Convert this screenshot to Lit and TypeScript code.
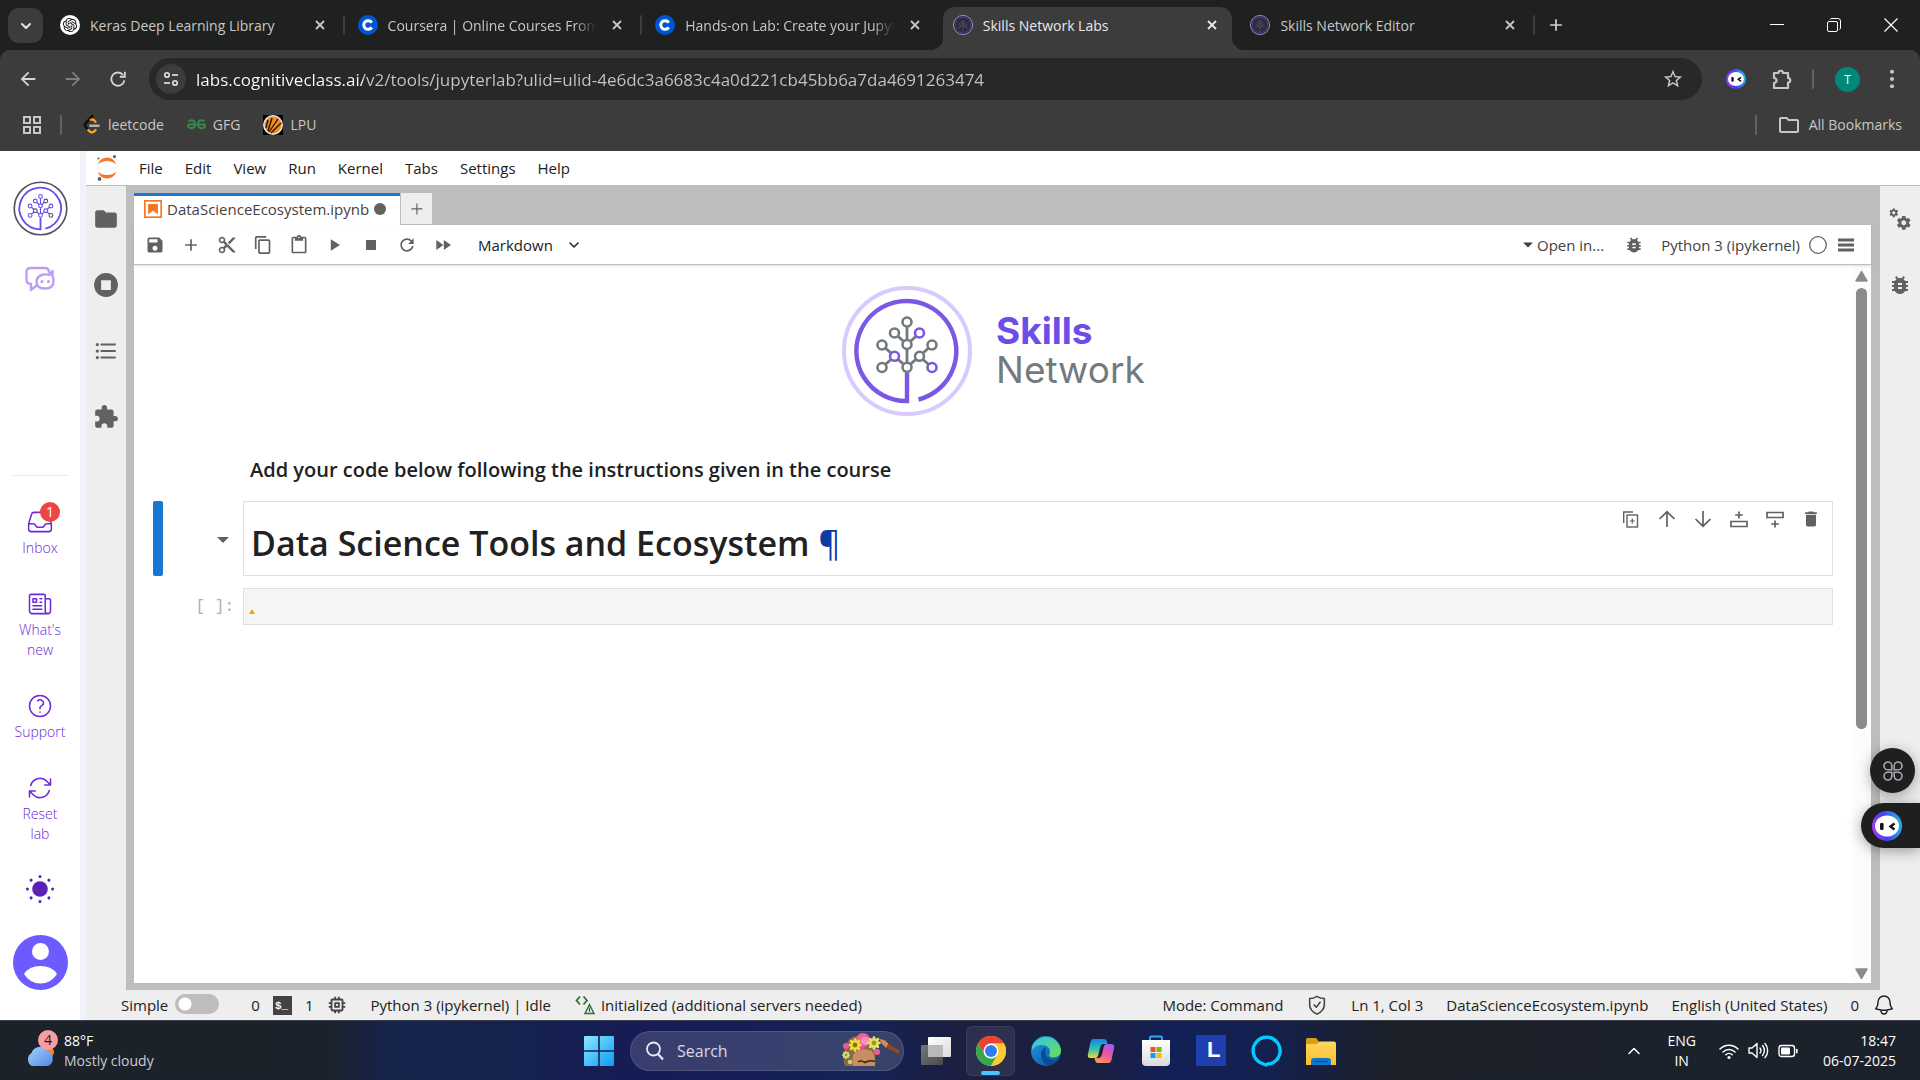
import { LitElement, html, svg, css, nothing, TemplateResult } from "lit";
import { customElement } from "lit/decorators.js";
import { classMap } from "lit/directives/class-map.js";

type Glyph = TemplateResult;

const icon = (size: number, body: Glyph, box = "0 0 24 24", fill = "currentColor") => html`
  <svg class="icon" width=${size} height=${size} viewBox=${box} fill=${fill} aria-hidden="true">${body}</svg>`;

const path = (d: string) => svg`<path d=${d}></path>`;
const line = (d: string, w: number) =>
  svg`<path d=${d} fill="none" stroke="currentColor" stroke-width=${w} stroke-linecap="round" stroke-linejoin="round"></path>`;

const P = {
  folder: "M10 4H4c-1.1 0-1.99.9-1.99 2L2 18c0 1.1.9 2 2 2h16c1.1 0 2-.9 2-2V8c0-1.1-.9-2-2-2h-8l-2-2z",
  folderLine: "M9.17 6l2 2H20v10H4V6h5.17M10 4H4c-1.1 0-1.99.9-1.99 2L2 18c0 1.1.9 2 2 2h16c1.1 0 2-.9 2-2V8c0-1.1-.9-2-2-2h-8l-2-2z",
  save: "M17 3H5c-1.11 0-2 .9-2 2v14c0 1.1.89 2 2 2h14c1.1 0 2-.9 2-2V7l-4-4zm-5 16c-1.66 0-3-1.34-3-3s1.34-3 3-3 3 1.34 3 3-1.34 3-3 3zm3-10H5V5h10v4z",
  add: "M19 13h-6v6h-2v-6H5v-2h6V5h2v6h6v2z",
  cut: "M9.64 7.64c.23-.5.36-1.05.36-1.64 0-2.21-1.79-4-4-4S2 3.79 2 6s1.79 4 4 4c.59 0 1.14-.13 1.64-.36L10 12l-2.36 2.36C7.14 14.13 6.59 14 6 14c-2.21 0-4 1.79-4 4s1.79 4 4 4 4-1.79 4-4c0-.59-.13-1.14-.36-1.64L12 14l7 7h3v-1L9.64 7.64zM6 8c-1.1 0-2-.89-2-2s.9-2 2-2 2 .89 2 2-.9 2-2 2zm0 12c-1.1 0-2-.89-2-2s.9-2 2-2 2 .89 2 2-.9 2-2 2zm6-7.5c-.28 0-.5-.22-.5-.5s.22-.5.5-.5.5.22.5.5-.22.5-.5.5zM19 3l-6 6 2 2 7-7V3z",
  copy: "M11.9,1H3.2C2.4,1,1.7,1.7,1.7,2.5v10.2h1.5V2.5h8.7V1z M14.1,3.9h-8c-0.8,0-1.5,0.7-1.5,1.5v10.2c0,0.8,0.7,1.5,1.5,1.5h8c0.8,0,1.5-0.7,1.5-1.5V5.4C15.5,4.6,14.9,3.9,14.1,3.9z M14.1,15.5h-8V5.4h8V15.5z",
  paste: "M19 2h-4.18C14.4.84 13.3 0 12 0c-1.3 0-2.4.84-2.82 2H5c-1.1 0-2 .9-2 2v16c0 1.1.9 2 2 2h14c1.1 0 2-.9 2-2V4c0-1.1-.9-2-2-2zm-7 0c.55 0 1 .45 1 1s-.45 1-1 1-1-.45-1-1 .45-1 1-1zm7 18H5V4h2v3h10V4h2v16z",
  run: "M7 5v14l11-7z",
  stop: "M6 6h12v12H6z",
  restart: "M9 13.5c-2.49 0-4.5-2.01-4.5-4.5S6.51 4.5 9 4.5c1.24 0 2.36.52 3.17 1.33L10 8h5V3l-1.76 1.76C12.15 3.68 10.66 3 9 3 5.69 3 3.01 5.69 3.01 9S5.69 15 9 15c2.97 0 5.43-2.16 5.9-5h-1.52c-.46 2-2.24 3.5-4.38 3.5z",
  forward: "M4 18l8.5-6L4 6v12zm9-12v12l8.5-6L13 6z",
  bug: "M20 8h-2.81c-.45-.78-1.07-1.45-1.82-1.96L17 4.41 15.59 3l-2.17 2.17C12.96 5.06 12.49 5 12 5c-.49 0-.96.06-1.41.17L8.41 3 7 4.41l1.62 1.63C7.88 6.55 7.26 7.22 6.81 8H4v2h2.09c-.05.33-.09.66-.09 1v1H4v2h2v1c0 .34.04.67.09 1H4v2h2.81c1.04 1.79 2.97 3 5.19 3s4.15-1.21 5.19-3H20v-2h-2.09c.05-.33.09-.66.09-1v-1h2v-2h-2v-1c0-.34-.04-.67-.09-1H20V8zm-6 8h-4v-2h4v2zm0-4h-4v-2h4v2z",
  list: "M7 5h14v2H7zM7 11h14v2H7zM7 17h14v2H7zM2.500 6a1.500 1.500 0 1 0 3 0a1.500 1.500 0 1 0-3 0M2.500 12a1.500 1.500 0 1 0 3 0a1.500 1.500 0 1 0-3 0M2.500 18a1.500 1.500 0 1 0 3 0a1.500 1.500 0 1 0-3 0",
  extension: "M20.5 11H19V7c0-1.1-.9-2-2-2h-4V3.500C13 2.120 11.880 1 10.500 1S8 2.120 8 3.500V5H4c-1.100 0-1.990.9-1.990 2v3.800H3.500c1.490 0 2.700 1.210 2.700 2.700s-1.210 2.700-2.700 2.700H2V20c0 1.100.9 2 2 2h3.800v-1.500c0-1.490 1.210-2.700 2.700-2.700 1.490 0 2.700 1.210 2.700 2.700V22H17c1.100 0 2-.9 2-2v-4h1.500c1.380 0 2.500-1.120 2.500-2.500S21.880 11 20.500 11z",
  gear: "M19.43 12.98c.04-.32.07-.64.07-.98s-.03-.66-.07-.98l2.11-1.65c.19-.15.24-.42.12-.64l-2-3.46c-.12-.22-.39-.3-.61-.22l-2.49 1c-.52-.4-1.08-.73-1.69-.98l-.38-2.65C14.46 2.18 14.25 2 14 2h-4c-.25 0-.46.18-.49.42l-.38 2.65c-.61.25-1.17.59-1.69.98l-2.49-1c-.23-.09-.49 0-.61.22l-2 3.46c-.13.22-.07.49.12.64l2.11 1.65c-.04.32-.07.65-.07.98s.03.66.07.98l-2.11 1.65c-.19.15-.24.42-.12.64l2 3.46c.12.22.39.3.61.22l2.49-1c.52.4 1.08.73 1.69.98l.38 2.65c.03.24.24.42.49.42h4c.25 0 .46-.18.49-.42l.38-2.65c.61-.25 1.17-.59 1.69-.98l2.49 1c.23.09.49 0 .61-.22l2-3.46c.12-.22.07-.49-.12-.64l-2.11-1.65zM12 15.5c-1.93 0-3.5-1.57-3.5-3.5s1.57-3.5 3.5-3.5 3.5 1.57 3.5 3.5-1.57 3.5-3.5 3.5z",
  trash: "M6 19c0 1.1.9 2 2 2h8c1.1 0 2-.9 2-2V7H6v12zM19 4h-3.5l-1-1h-5l-1 1H5v2h14V4z",
  star: "M22 9.24l-7.19-.62L12 2 9.19 8.63 2 9.24l5.46 4.73L5.82 21 12 17.27 18.18 21l-1.63-7.03L22 9.24zM12 15.4l-3.76 2.27 1-4.28-3.32-2.88 4.38-.38L12 6.1l1.71 4.04 4.38.38-3.32 2.88 1 4.28L12 15.4z",
  back: "M20 11H7.83l5.59-5.59L12 4l-8 8 8 8 1.41-1.41L7.83 13H20v-2z",
  chip: "M15 9H9v6h6V9zm-2 4h-2v-2h2v2zm8-2V9h-2V7c0-1.100-.9-2-2-2h-2V3h-2v2h-2V3H9v2H7c-1.100 0-2 .9-2 2v2H3v2h2v2H3v2h2v2c0 1.100.9 2 2 2h2v2h2v-2h2v2h2v-2h2c1.100 0 2-.9 2-2v-2h2v-2h-2v-2h2zm-4 6H7V7h10v10z",
  inbox: "M2.25 13.5h3.86a2.25 2.25 0 0 1 2.012 1.244l.256.512a2.25 2.25 0 0 0 2.013 1.244h3.218a2.25 2.25 0 0 0 2.013-1.244l.256-.512a2.25 2.25 0 0 1 2.013-1.244h3.859m-19.5.338V18a2.25 2.25 0 0 0 2.25 2.25h15A2.25 2.25 0 0 0 21.75 18v-4.162c0-.224-.034-.447-.1-.661L19.24 5.338a2.25 2.25 0 0 0-2.15-1.588H6.911a2.25 2.25 0 0 0-2.15 1.588L2.35 13.177a2.25 2.25 0 0 0-.1.661Z",
  news: "M12 7.5h1.5m-1.5 3h1.5m-7.5 3h7.5m-7.5 3h7.5m3-9h3.375c.621 0 1.125.504 1.125 1.125V18a2.25 2.25 0 0 1-2.25 2.25M16.5 7.5V18a2.25 2.25 0 0 0 2.25 2.25M16.5 7.5V4.875c0-.621-.504-1.125-1.125-1.125H4.125C3.504 3.75 3 4.254 3 4.875V18a2.25 2.25 0 0 0 2.25 2.25h13.5M6 7.5h3v3H6v-3Z",
  help: "M9.879 7.519c1.171-1.025 3.071-1.025 4.242 0 1.172 1.025 1.172 2.687 0 3.712-.203.179-.43.326-.67.442-.745.361-1.45.999-1.45 1.827v.75M21 12a9 9 0 1 1-18 0 9 9 0 0 1 18 0Zm-9 5.25h.008v.008H12v-.008Z",
  reset: "M16.023 9.348h4.992v-.001M2.985 19.644v-4.992m0 0h4.992m-4.993 0 3.181 3.183a8.25 8.25 0 0 0 13.803-3.7M4.031 9.865a8.25 8.25 0 0 1 13.803-3.7l3.181 3.182m0-4.991v4.99",
  bell: "M14.857 17.082a23.848 23.848 0 0 0 5.454-1.31A8.967 8.967 0 0 1 18 9.75V9A6 6 0 0 0 6 9v.75a8.967 8.967 0 0 1-2.312 6.022c1.733.64 3.56 1.085 5.455 1.31m5.714 0a24.255 24.255 0 0 1-5.714 0m5.714 0a3 3 0 1 1-5.714 0",
  knot: "M22.2819 9.8211a5.9847 5.9847 0 0 0-.5157-4.9108 6.0462 6.0462 0 0 0-6.5098-2.9A6.0651 6.0651 0 0 0 4.9807 4.1818a5.9847 5.9847 0 0 0-3.9977 2.9 6.0462 6.0462 0 0 0 .7427 7.0966 5.98 5.98 0 0 0 .511 4.9107 6.051 6.051 0 0 0 6.5146 2.9001A5.9847 5.9847 0 0 0 13.2599 24a6.0557 6.0557 0 0 0 5.7718-4.2058 5.9894 5.9894 0 0 0 3.9977-2.9001 6.0557 6.0557 0 0 0-.7475-7.0729zm-9.022 12.6081a4.4755 4.4755 0 0 1-2.8764-1.0408l.1419-.0804 4.7783-2.7582a.7948.7948 0 0 0 .3927-.6813v-6.7369l2.02 1.1686a.071.071 0 0 1 .038.052v5.5826a4.504 4.504 0 0 1-4.4945 4.4944zm-9.6607-4.1254a4.4708 4.4708 0 0 1-.5346-3.0137l.142.0852 4.783 2.7582a.7712.7712 0 0 0 .7806 0l5.8428-3.3685v2.3324a.0804.0804 0 0 1-.0332.0615L9.74 19.9502a4.4992 4.4992 0 0 1-6.1408-1.6464zM2.3408 7.8956a4.485 4.485 0 0 1 2.3655-1.9728V11.6a.7664.7664 0 0 0 .3879.6765l5.8144 3.3543-2.0201 1.1685a.0757.0757 0 0 1-.071 0l-4.8303-2.7865A4.504 4.504 0 0 1 2.3408 7.872zm16.5963 3.8558L13.1038 8.364 15.1192 7.2a.0757.0757 0 0 1 .071 0l4.8303 2.7913a4.4944 4.4944 0 0 1-.6765 8.1042v-5.6772a.79.79 0 0 0-.407-.667zm2.0107-3.0231l-.142-.0852-4.7735-2.7818a.7759.7759 0 0 0-.7854 0L9.409 9.2297V6.8974a.0662.0662 0 0 1 .0284-.0615l4.8303-2.7866a4.4992 4.4992 0 0 1 6.6802 4.66zM8.3065 12.863l-2.02-1.1638a.0804.0804 0 0 1-.038-.0567V6.0742a4.4992 4.4992 0 0 1 7.3757-3.4537l-.142.0805L8.704 5.459a.7948.7948 0 0 0-.3927.6813zm1.0976-2.3654l2.602-1.4998 2.6069 1.4998v2.9994l-2.5974 1.4997-2.6067-1.4997Z",
};

/* Skills Network tree emblem. "accented" lists the nodes drawn in the second colour. */
const NODES: [number, number][] = [
  [0, -29], [-12.5, -18], [12.5, -18], [0, -6.5], [-25, -6], [25, -6],
  [-12.5, 5.3], [12.5, 5.3], [-25, 16.5], [25, 16.5], [0, 16.3],
];
interface TreeLook { outer: string; ring: string; node: string; accent: string; accented: number[]; bg: string; weight: number }
const tree = (size: number, t: TreeLook) => icon(size, svg`
  <circle r="63" fill=${t.bg} stroke=${t.outer} stroke-width=${t.weight}></circle>
  <path d="M11.500 48.500A50 50 0 1 0 -1 50H0V22" fill="none" stroke=${t.ring} stroke-width="4.400"></path>
  <path d="M0 -29V16M-12.500 -18L0 -6.500L12.500 -18M-25 -6L0 16.300L25 -6M-25 16.500L-12.500 5.300M25 16.500L12.500 5.300" fill="none" stroke=${t.node} stroke-width="2.800"></path>
  ${NODES.map(([x, y], i) => svg`<circle cx=${x} cy=${y} r="4.500" fill=${t.bg} stroke=${t.accented.includes(i) ? t.accent : t.node} stroke-width="2.600"></circle>`)}
`, "-66 -66 132 132", "none");

const treeFavicon = () => tree(20, { outer: "#a598d8", ring: "#5f45b8", node: "#6d6580", accent: "#6b4fd0", accented: [2, 6, 9], bg: "#2c2a35", weight: 6 });

const cIcon = () => icon(20, svg`<circle cx="12" cy="12" r="12" fill="#0056d2"></circle>
  <path d="M16.500 9.200A5.200 5.200 0 1 0 16.500 14.800" fill="none" stroke="#fff" stroke-width="3.600"></path>`);
const knotIcon = () => icon(20, svg`<circle cx="12" cy="12" r="12" fill="#fff"></circle>
  <path transform="translate(3.500 3.500) scale(.71)" fill="#111" d=${P.knot}></path>`);

const closeIcon = (s = 12) => icon(s, svg`<path d="M2 2L10 10M10 2L2 10" stroke="currentColor" stroke-width="1.800" fill="none"></path>`, "0 0 12 12");

/* Assistant face, shared by the extension button and the floating pill. */
const face = (size: number) => icon(size, svg`
    <defs><linearGradient id="face" x1="0" y1=".7" x2="1" y2=".5">
      <stop offset="0" stop-color="#a83cf0"></stop><stop offset=".45" stop-color="#4a3df5"></stop><stop offset="1" stop-color="#1fb6e6"></stop>
    </linearGradient></defs>
    <circle cx="15" cy="15" r="15" fill="url(#face)"></circle>
    <ellipse cx="15" cy="15" rx="12" ry="10.500" fill="#fff"></ellipse>
    <rect x="8" y="12" width="3.600" height="7" rx="1.200" fill="#111"></rect>
    <path d="M22.500 12.500L18.500 15.500L22.500 18.500" fill="none" stroke="#111" stroke-width="2.400"></path>`, "0 0 30 30");

const sharedStyles = css`
  :host, * { box-sizing: border-box; }
  .icon { display: block; flex: none; }
  button, input, select { font: inherit; color: inherit; margin: 0; }
  button { border: 0; padding: 0; background: none; display: flex; align-items: center; justify-content: center; cursor: pointer; }
  a { color: inherit; text-decoration: none; }
`;

interface Tab { title: string; icon: () => Glyph; active?: boolean; quiet?: boolean }

@customElement("browser-chrome")
class BrowserChrome extends LitElement {
  static styles = [sharedStyles, css`
    :host { display: block; background: #1f2120; color: #c7c7c7; font-size: 14px; }
    .strip { display: flex; align-items: stretch; height: 50px; }
    .search { width: 35px; height: 35px; margin: 8px 4px 0 8px; border-radius: 11px; background: #3c3c3c; color: #e3e3e3; }
    .tabs { display: grid; grid-template-columns: repeat(5, minmax(0, 1fr)); flex: 0 1 1488px; }
    .tab { position: relative; display: flex; align-items: center; gap: 10px; padding: 0 18px 0 13px; min-width: 0; }
    .title { flex: 1; min-width: 0; overflow: hidden; white-space: nowrap; }
    .fade { -webkit-mask-image: linear-gradient(90deg, #000 88%, transparent 98%); mask-image: linear-gradient(90deg, #000 88%, transparent 98%); }
    .label { display: flex; flex: 1; align-items: center; gap: 10px; min-width: 0; height: 50px; position: relative; }
    .rule::after { content: ""; position: absolute; right: 0; top: 15px; width: 2px; height: 20px; background: #3c3d3d; border-radius: 1px; }
    .active { color: #e8e8e8; }
    .active::before { content: ""; position: absolute; inset: 7px 5px 0 3px; background: #3c3c3c; border-radius: 12px 12px 0 0; }
    .flare { position: absolute; bottom: 0; width: 12px; height: 12px; }
    .flare-l { left: -9px; background: radial-gradient(circle at 0 0, transparent 12px, #3c3c3c 12px); }
    .flare-r { right: -7px; background: radial-gradient(circle at 100% 0, transparent 12px, #3c3c3c 12px); }
    .close { width: 14px; height: 20px; position: relative; }
    .new { width: 42px; color: #d5d5d5; }
    .window { display: flex; margin-left: auto; padding-right: 1px; color: #fff; }
    .window button { width: 57px; }
    .bar { display: flex; align-items: center; height: 58px; padding: 0 13px 0 5px; background: #3c3c3c; border-radius: 10px 10px 0 0; }
    .nav { width: 45px; height: 42px; color: #d5d5d5; }
    .dim { color: #7f7f7f; }
    .omni { display: flex; flex: 1; align-items: center; height: 42px; margin: 0 11px 0 9px; padding: 0 18px 0 7px; border-radius: 21px; background: #282828; }
    .site { width: 30px; height: 30px; border-radius: 50%; background: #3c3c3c; color: #d5d5d5; }
    .url { flex: 1; min-width: 0; margin-left: 10px; border: 0; padding: 0; outline: 0; font-size: 17px; height: 30px;
      background: linear-gradient(90deg, #fff 167px, #c4c6c9 167px) text; -webkit-text-fill-color: transparent; }
    .ext { width: 46px; height: 36px; }
    .sep { width: 2px; height: 20px; background: #616161; border-radius: 1px; }
    .bar .sep { margin-left: 7px; }
    .avatar { width: 25px; height: 25px; margin: 0 17px 0 21px; border-radius: 50%; background: #00897b; color: #fff; font-size: 12px; }
    .more { width: 30px; height: 30px; }
    .marks { display: flex; align-items: center; height: 43px; padding: 0 18px 10px 22px; background: #3c3c3c; }
    .mark { display: flex; align-items: center; gap: 7px; margin-left: 23px; height: 24px; }
    .marks .sep { margin-left: 18px; }
    .sep + .mark { margin-left: 20px; }
    .all { margin-left: auto; display: flex; align-items: center; }
    .all .mark { gap: 8px; }
  `];

  private tabs: Tab[] = [
    { title: "Keras Deep Learning Library", icon: knotIcon },
    { title: "Coursera | Online Courses From Top Universities", icon: cIcon },
    { title: "Hands-on Lab: Create your Jupyter Notebook", icon: cIcon, quiet: true },
    { title: "Skills Network Labs", icon: treeFavicon, active: true },
    { title: "Skills Network Editor", icon: treeFavicon },
  ];

  render() {
    return html`
      <div class="strip">
        <button class="search" aria-label="Search tabs">${icon(14, line("M3 5L7 9L11 5", 2), "0 0 14 14")}</button>
        <div class="tabs">
          ${this.tabs.map((t) => html`
            <div class=${classMap({ tab: true, active: !!t.active, rule: !t.active && !t.quiet })}>
              ${t.active ? html`<span class="flare flare-l"></span><span class="flare flare-r"></span>` : nothing}
              <div class="label">${t.icon()}<span class=${classMap({ title: true, fade: t.title.length > 30 })}>${t.title}</span></div>
              <button class="close" aria-label="Close tab">${closeIcon()}</button>
            </div>`)}
        </div>
        <button class="new" aria-label="New tab">${icon(20, path(P.add))}</button>
        <div class="window">
          <button aria-label="Minimize">${icon(14, svg`<path d="M0 6.500H14" stroke="currentColor"></path>`, "0 0 14 14")}</button>
          <button aria-label="Restore">${icon(14, svg`<rect x=".5" y="3.500" width="10" height="10" rx="1.500" fill="none" stroke="currentColor"></rect><path d="M3 1.500Q3.500 .5 5 .5H11Q13.500 .5 13.500 3V10Q13.500 11 12.500 11.500" fill="none" stroke="currentColor"></path>`, "0 0 14 14")}</button>
          <button aria-label="Close">${icon(14, svg`<path d="M.5 .5L13.500 13.500M13.500 .5L.5 13.500" stroke="currentColor" stroke-width="1.200"></path>`, "0 0 14 14")}</button>
        </div>
      </div>
      <div class="bar">
        <button class="nav" aria-label="Back">${icon(22, path(P.back))}</button>
        <button class="nav dim" aria-label="Forward">${icon(22, svg`<path transform="rotate(180 12 12)" d=${P.back}></path>`)}</button>
        <button class="nav" aria-label="Reload">${icon(22, svg`<path d="M19 13.500A7.200 7.200 0 1 1 17.500 7.500M19.500 4V9.500H14" fill="none" stroke="currentColor" stroke-width="2"></path>`)}</button>
        <div class="omni">
          <button class="site" aria-label="Site information">${icon(16, svg`<g fill="none" stroke="currentColor" stroke-width="1.800"><circle cx="4" cy="4" r="2.200"></circle><path d="M9 4H15"></path><circle cx="12" cy="12" r="2.200"></circle><path d="M1 12H7"></path></g>`, "0 0 16 16")}</button>
          <input class="url" type="text" aria-label="Address" .value=${"labs.cognitiveclass.ai/v2/tools/jupyterlab?ulid=ulid-4e6dc3a6683c4a0d221cb45bb6a7da4691263474"} />
          <button aria-label="Bookmark this page">${icon(22, path(P.star))}</button>
        </div>
        <button class="ext" aria-label="Assistant">${face(20)}</button>
        <button class="ext" aria-label="Extensions">${icon(24, svg`<path d="M4 6H8.500A2.200 2.200 0 0 1 13 6H18V11A2.200 2.200 0 0 1 18 15.500V21H4V16A2.300 2.300 0 0 0 4 11Z" fill="none" stroke="currentColor" stroke-width="2.200" stroke-linejoin="round"></path>`)}</button>
        <span class="sep"></span>
        <button class="avatar" aria-label="Profile">T</button>
        <button class="more" aria-label="Menu">${icon(22, svg`<circle cx="12" cy="4" r="2.200"></circle><circle cx="12" cy="12" r="2.200"></circle><circle cx="12" cy="20" r="2.200"></circle>`)}</button>
      </div>
      <div class="marks">
        <button aria-label="Apps">${icon(20, svg`<g fill="none" stroke="currentColor" stroke-width="2"><rect x="2" y="2" width="6" height="6"></rect><rect x="12" y="2" width="6" height="6"></rect><rect x="2" y="12" width="6" height="6"></rect><rect x="12" y="12" width="6" height="6"></rect></g>`, "0 0 20 20")}</button>
        <span class="sep"></span>
        <a class="mark" href="#leetcode">${icon(19, svg`<g fill="none" stroke-width="3" stroke-linecap="round" stroke-linejoin="round"><path d="M13 1.500L4.500 10.500Q2.500 12.500 4.500 15L8 19" stroke="#0b0b0b"></path><path d="M8 19L10 21Q12.500 23 15 21L17 19M11 6Q13.500 5 15 6.500L17 8.500" stroke="#ffa116"></path><path d="M10.500 13.500H21" stroke="#b3b3b3"></path></g>`)}leetcode</a>
        <a class="mark" href="#gfg">${icon(19, svg`<g fill="none" stroke="#2f8d46" stroke-width="2.400"><path d="M1 12H10.500M2 8Q6 5.500 9 8Q12 12 9 15.500Q5.500 18 2 15.500Q1 14 1 12"></path><path d="M23 12H13.500M22 8Q18 5.500 15 8Q12 12 15 15.500Q18.500 18 22 15.500Q23 14 23 12"></path></g>`)}GFG</a>
        <a class="mark" href="#lpu">${icon(20, svg`<rect width="20" height="20" fill="#000"></rect><circle cx="10" cy="10" r="9.200" fill="#f28a1d" stroke="#e9e9e9" stroke-width="1.500"></circle><path d="M5 16L9 3M6 17L15 4M8 18L18 8M3 13L5 5" stroke="#111" stroke-width="1.300"></path>`, "0 0 20 20")}LPU</a>
        <div class="all"><span class="sep"></span><a class="mark" href="#all">${icon(24, path(P.folderLine))}All Bookmarks</a></div>
      </div>`;
  }
}

@customElement("portal-rail")
class PortalRail extends LitElement {
  static styles = [sharedStyles, css`
    :host { display: flex; flex: none; flex-direction: column; align-items: center; width: 86px; padding: 30px 0; background: #fff; border-right: 6px solid #f0f3fa; color: #6d28d9; font-size: 14px; font-weight: 300; line-height: 20px; }
    .chat { margin-top: 28px; color: #bd9ef5; }
    .rule { width: 55px; height: 1px; margin: auto 0 32px; background: #e5e7eb; }
    nav { display: flex; flex-direction: column; align-items: center; gap: 32px; }
    .item { flex-direction: column; gap: 2px; position: relative; width: 54px; }
    .badge { position: absolute; left: 27px; top: -6px; width: 20px; height: 20px; border-radius: 50%; background: #ef4444; color: #fff; font-weight: 400; text-align: center; }
    .sun { color: #5b21b6; margin-top: -2px; }
    .me { margin-top: -1px; }
  `];
  private item(label: string, d: string, badge = "") {
    return html`<button class="item">${icon(28, line(d, 1.3))}<span>${label}</span>${badge ? html`<span class="badge">${badge}</span>` : nothing}</button>`;
  }
  render() {
    return html`
      <a href="#home" aria-label="Skills Network">${tree(55, { outer: "#4b5563", ring: "#6c4cf0", node: "#6c4cf0", accent: "#4b5563", accented: [2, 6, 9], bg: "#fff", weight: 4 })}</a>
      <button class="chat" aria-label="Chat">${icon(32, svg`<g fill="none" stroke="currentColor" stroke-width="2.400" stroke-linejoin="round" stroke-linecap="round">
        <path d="M25 8Q25 4 21 4H7Q2.500 4 2.500 8V16Q2.500 19.500 7 20V26L12 22"></path>
        <path d="M28.500 7L25.500 11Q23 10 19 10.500Q12.500 12 12.500 18Q12.500 24.500 21 24.500Q29.500 24.500 29.500 17.500Q29.500 14 28.500 12Z"></path></g>
        <circle cx="18" cy="17.500" r="1.600"></circle><circle cx="24.500" cy="17.500" r="1.600"></circle>`, "0 0 32 32")}</button>
      <div class="rule"></div>
      <nav>
        ${this.item("Inbox", P.inbox, "1")}
        ${this.item("What's new", P.news)}
        ${this.item("Support", P.help)}
        ${this.item("Reset lab", P.reset)}
        <button class="sun" aria-label="Toggle theme">${icon(30, svg`<circle cx="15" cy="15" r="7.800"></circle>${[0, 45, 90, 135, 180, 225, 270, 315].map((a) => svg`<circle cx="15" cy="2.400" r="1.500" transform=${`rotate(${a} 15 15)`}></circle>`)}`, "0 0 30 30")}</button>
        <button class="me" aria-label="Account">${icon(55, svg`<circle cx="27.500" cy="27.500" r="27.500" fill="#6c5cff"></circle><circle cx="27.500" cy="16.500" r="8.500" fill="#fff"></circle><path d="M11 39Q16 31 27.500 31T44 39Q38 48.500 27.500 48.500T11 39Z" fill="#fff"></path>`, "0 0 55 55")}</button>
      </nav>`;
  }
}

@customElement("notebook-panel")
class NotebookPanel extends LitElement {
  static styles = [sharedStyles, css`
    :host { display: flex; flex-direction: column; flex: 1; min-width: 0; color: #212121; font-size: 15px; }
    .tabs { display: flex; height: 32px; align-items: flex-start; }
    .tab { display: flex; align-items: center; gap: 5px; height: 32px; padding: 0 14px 3px 10px; background: #fff; border-top: 3px solid #1976d2; color: #424242; white-space: nowrap; }
    .plus { width: 31px; height: 31px; background: #eee; color: #616161; margin-left: 1px; }
    .tools { display: flex; align-items: center; height: 40px; padding: 0 15px 0 3px; background: #fff; border-bottom: 1px solid #bdbdbd; color: #616161; box-shadow: 0 1px 2px rgba(0,0,0,.12); position: relative; }
    .tools button { width: 36px; height: 30px; }
    .kind { display: flex; align-items: center; margin-left: 17px; color: #212121; }
    .kind select { appearance: none; border: 0; background: none; padding: 0; width: 89px; outline: 0; }
    .right { display: flex; align-items: center; margin-left: auto; color: #424242; }
    .right .open { width: auto; gap: 4px; margin-right: 12px; }
    .right .kernel { width: auto; margin-left: 9px; margin-right: 8px; }
    .right .ring { width: 20px; height: 20px; }
    .right .menu { width: 20px; margin-left: 8px; color: #616161; }
    .right .bug { color: #616161; }
    .body { display: flex; flex: 1; background: #fff; min-height: 0; }
    .doc { flex: 1; min-width: 0; padding: 20px 19px; }
    .brand { display: flex; justify-content: center; align-items: center; gap: 23px; padding-left: 3px; font-family: Inter, "Open Sans", sans-serif; font-size: 37px; line-height: 39px; color: #737a7e; }
    .brand b { display: block; color: #6d4de8; font-weight: 700; }
    .brand span { display: block; }
    .brand .words { padding-bottom: 3px; width: 152px; }
    .note { margin: 40px 0 18px 97px; font-size: 20px; line-height: 26px; font-weight: 600; }
    .cell { display: grid; grid-template-columns: 10px 80px minmax(0, 1fr); }
    .mark { background: #1976d2; border-radius: 2px; }
    .fold { justify-content: flex-end; color: #616161; padding: 3px 13px 0 0; height: 75px; }
    .md { display: flex; justify-content: space-between; align-items: flex-start; height: 75px; border: 1px solid #e0e0e0; padding: 0 3px 0 7px; }
    h1 { margin: 17px 0 0; font-size: 34px; line-height: 48px; font-weight: 600; }
    h1 a { color: #0d3ca8; font-weight: 400; }
    .acts { display: flex; margin-top: 7px; color: #616161; }
    .acts button { width: 36px; height: 20px; }
    .code { margin-top: 12px; }
    .prompt { grid-column: 1 / 3; padding: 9px 9px 0 0; text-align: right; white-space: pre; font: 16px/20px "Liberation Mono", monospace; color: #b0b0b0; }
    .input { height: 37px; border: 1px solid #e0e0e0; background: #f5f5f5; padding: 20px 0 0 5px; color: #ffa000; }
    .scroll { display: flex; flex: none; flex-direction: column; align-items: center; gap: 5px; width: 19px; padding: 5px 0 3px; background: #fcfcfc; color: #8b8b8b; }
    .thumb { width: 11px; border-radius: 6px; background: #8b8b8b; flex: 0 1 441px; }
    .down { margin-top: auto; }
  `];
  private tool(label: string, body: Glyph, size = 20, box = "0 0 24 24") {
    return html`<button aria-label=${label}>${icon(size, body, box)}</button>`;
  }
  render() {
    const arrow = (d: string) => icon(13, svg`<path d=${d} stroke="currentColor" stroke-width="1.500" stroke-linejoin="round"></path>`, "0 0 12 12");
    return html`
      <div class="tabs">
        <div class="tab">
          ${icon(18, svg`<rect x="1" y="1" width="20" height="20" fill="none" stroke="#f37726" stroke-width="2"></rect><path d="M5 5H17V17.500L11 13L5 17.500Z" fill="#f37726"></path>`, "0 0 22 22")}
          <span>DataScienceEcosystem.ipynb</span>
          ${icon(12, svg`<circle cx="6" cy="6" r="6" fill="#616161"></circle>`, "0 0 12 12")}
        </div>
        <button class="plus" aria-label="New launcher">${icon(20, path("M18.500 12.600h-5.900v5.900h-1.400v-5.900H5.300v-1.400h5.900V5.300h1.400v5.900h5.900z"))}</button>
      </div>
      <div class="tools">
        ${this.tool("Save", path(P.save))}
        ${this.tool("Insert cell", path(P.add))}
        ${this.tool("Cut", path(P.cut))}
        ${this.tool("Copy", path(P.copy), 20, "0 0 18 18")}
        ${this.tool("Paste", path(P.paste))}
        ${this.tool("Run", path(P.run))}
        ${this.tool("Interrupt", path(P.stop))}
        ${this.tool("Restart", path(P.restart), 20, "0 0 18 18")}
        ${this.tool("Restart and run all", path(P.forward))}
        <label class="kind"><select aria-label="Cell type"><option>Markdown</option><option>Code</option><option>Raw</option></select>${icon(14, line("M3 5L7 9L11 5", 1.5), "0 0 14 14")}</label>
        <div class="right">
          <button class="open">${icon(10, path("M0 2.500H10L5 7.500Z"), "0 0 10 10")}Open in...</button>
          <button class="bug" aria-label="Debugger">${icon(20, path(P.bug))}</button>
          <button class="kernel">Python 3 (ipykernel)</button>
          <button class="ring" aria-label="Kernel idle">${icon(20, svg`<circle cx="10" cy="10" r="8.300" fill="none" stroke="#616161" stroke-width="1.300"></circle>`, "0 0 20 20")}</button>
          <button class="menu" aria-label="More">${icon(16, path("M0 1.500h16v3H0zM0 6.500h16v3H0zM0 11.500h16v3H0z"), "0 0 16 16")}</button>
        </div>
      </div>
      <div class="body">
        <div class="doc">
          <div class="brand">
            ${tree(132, { outer: "#d6caff", ring: "#7b57e6", node: "#737a7e", accent: "#7b57e6", accented: [2, 6, 9], bg: "#fff", weight: 4 })}
            <div class="words"><b>Skills</b><span>Network</span></div>
          </div>
          <h4 class="note">Add your code below following the instructions given in the course</h4>
          <section class="cell">
            <div class="mark"></div>
            <button class="fold" aria-label="Collapse section">${icon(14, path("M1 4H13L7 10Z"), "0 0 14 14")}</button>
            <div class="md">
              <h1>Data Science Tools and Ecosystem <a href="#data-science-tools">¶</a></h1>
              <div class="acts">
                ${this.tool("Duplicate cell", svg`<g fill="none" stroke="currentColor" stroke-width="1.400"><path d="M1.700 13V2H11"></path><rect x="5" y="5" width="10.500" height="12"></rect><path d="M10.300 8.500V13.500M7.800 11H12.800" stroke-width="1.200"></path></g>`, 18, "0 0 18 18")}
                ${this.tool("Move up", svg`<path d="M9 17V2.500M1.500 9L9 1.800L16.500 9" fill="none" stroke="currentColor" stroke-width="1.700"></path>`, 18, "0 0 18 18")}
                ${this.tool("Move down", svg`<path d="M9 1V15.500M1.500 9L9 16.200L16.500 9" fill="none" stroke="currentColor" stroke-width="1.700"></path>`, 18, "0 0 18 18")}
                ${this.tool("Insert above", svg`<path d="M1 11.500H17V16.500H1ZM9 1.500V8.500M5.200 5H12.800" fill="none" stroke="currentColor" stroke-width="1.700"></path>`, 18, "0 0 18 18")}
                ${this.tool("Insert below", svg`<path d="M1 2.500H17V7.500H1ZM9 10.500V17.500M5.200 14H12.800" fill="none" stroke="currentColor" stroke-width="1.700"></path>`, 18, "0 0 18 18")}
                ${this.tool("Delete cell", path(P.trash))}
              </div>
            </div>
          </section>
          <section class="cell code">
            <div class="prompt">[ ]:</div>
            <div class="input">${icon(6, path("M3 0L6 5H0Z"), "0 0 6 6")}</div>
          </section>
        </div>
        <div class="scroll" aria-hidden="true">
          ${arrow("M6 1.500L11 10H1Z")}
          <div class="thumb"></div>
          <div class="down">${arrow("M6 10.500L11 2H1Z")}</div>
        </div>
      </div>`;
  }
}

@customElement("jupyter-lab")
class JupyterLab extends LitElement {
  static styles = [sharedStyles, css`
    :host { display: flex; flex-direction: column; flex: 1; min-width: 0; background: #eee; color: #212121; font-size: 15px; position: relative; }
    header { display: flex; align-items: center; height: 35px; padding-left: 8px; background: #fff; border-bottom: 1px solid #bdbdbd; }
    header nav { display: flex; margin-left: 8px; }
    header nav button { padding: 0 11px; height: 34px; }
    .work { display: flex; flex: 1; min-height: 0; }
    .side { flex: none; display: flex; flex-direction: column; align-items: center; width: 40px; color: #616161; }
    .side button { width: 40px; height: 66px; }
    .dock { display: flex; flex: 1; min-width: 0; background: #bdbdbd; padding: 7px 9px 7px 8px; }
    footer { display: flex; align-items: center; justify-content: space-between; height: 30px; padding: 0 24px 0 35px; white-space: nowrap; }
    .group { display: flex; align-items: center; }
    .simple { display: flex; align-items: center; gap: 7px; margin-right: 32px; }
    .toggle { appearance: none; width: 44px; height: 20px; border-radius: 10px; background: radial-gradient(circle at 10px 10px, #fff 6px, #bdbdbd 7px); margin-bottom: 3px; }
    .n { margin-right: 13px; }
    .term { margin-right: 13px; }
    .chip { margin-right: 22px; color: #424242; }
    .lsp { margin: 0 6px 0 24px; }
    .right { gap: 23px; }
    .bell { gap: 13px; }
    .float { position: absolute; right: 0; bottom: 172px; display: flex; flex-direction: column; align-items: flex-end; gap: 10px; }
    .float button { background: #1f1f1f; height: 45px; color: #a9a4b0; box-shadow: 0 3px 14px rgba(0,0,0,.35); }
    .float .dots { width: 45px; border-radius: 50%; margin-right: 5px; }
    .float .pill { width: 59px; border-radius: 23px 0 0 23px; padding-right: 7px; }
  `];
  render() {
    return html`
      <header>
        ${icon(26, svg`<g fill="#f37726"><path d="M3.500 9.500Q6.500 2.500 13 2.500T22.500 9.500Q18.500 6 13 6T3.500 9.500Z"></path><path d="M3.500 16.500Q6.500 23.500 13 23.500T22.500 16.500Q18.500 20 13 20T3.500 16.500Z"></path></g><g fill="#616161"><circle cx="20.500" cy="1.600" r="1.600"></circle><circle cx="4.500" cy="3.500" r="1.100"></circle><circle cx="5.500" cy="24" r="1.900"></circle></g>`, "0 0 26 26")}
        <nav>${["File", "Edit", "View", "Run", "Kernel", "Tabs", "Settings", "Help"].map((m) => html`<button>${m}</button>`)}</nav>
      </header>
      <div class="work">
        <div class="side">
          <button aria-label="File browser">${icon(26, path(P.folder))}</button>
          <button aria-label="Running kernels">${icon(26, svg`<path fill-rule="evenodd" d="M12 1a11 11 0 1 0 0 22a11 11 0 1 0 0-22zM7.500 7.500h9v9h-9z"></path>`)}</button>
          <button aria-label="Table of contents">${icon(26, path(P.list))}</button>
          <button aria-label="Extension manager">${icon(26, path(P.extension))}</button>
        </div>
        <div class="dock"><notebook-panel></notebook-panel></div>
        <div class="side">
          <button aria-label="Property inspector">${icon(24, svg`<path transform="translate(7.500 7.500) scale(.69)" d=${P.gear}></path><path transform="translate(.5 .5) scale(.44)" d=${P.gear}></path>`)}</button>
          <button aria-label="Debugger">${icon(24, path(P.bug))}</button>
        </div>
      </div>
      <footer>
        <div class="group">
          <label class="simple">Simple <input class="toggle" type="checkbox" role="switch" /></label>
          <span class="n">0</span>
          <svg class="term" width="19" height="19" viewBox="0 0 19 19" aria-hidden="true"><rect width="19" height="19" fill="#424242"></rect><text x="2" y="13" font-family="Liberation Mono, monospace" font-size="11" font-weight="700" fill="#fff">$_</text></svg>
          <span class="n">1</span>
          <span class="chip">${icon(22, path(P.chip))}</span>
          <span>Python 3 (ipykernel) | Idle</span>
          <span class="lsp">${icon(20, svg`<g fill="none" stroke="#2e6b2e" stroke-width="1.700"><path d="M5 1.500L1.500 5.500L5 9.500M8.500 1.500L12 5.500L8.500 9.500"></path><path d="M14.500 9.500L19 18.500H10Z" stroke-width="1.400"></path><path d="M14.500 12.500V17" stroke-width="1.200"></path></g>`, "0 0 20 20")}</span>
          <span>Initialized (additional servers needed)</span>
        </div>
        <div class="group right">
          <span>Mode: Command</span>
          ${icon(22, svg`<g fill="none" stroke="#424242" stroke-width="1.700" stroke-linejoin="round"><path d="M12 2.500Q8 5 4 5V12Q4 18 12 22Q20 18 20 12V5Q16 5 12 2.500Z"></path><path d="M8.500 11.500L11.200 14.500L15.800 8.500"></path></g>`)}
          <span>Ln 1, Col 3</span>
          <span>DataScienceEcosystem.ipynb</span>
          <span>English (United States)</span>
          <span class="group bell"><span>0</span>${icon(24, line(P.bell, 1.5))}</span>
        </div>
      </footer>
      <div class="float">
        <button class="dots" aria-label="Apps">${icon(20, svg`<g fill="none" stroke="currentColor" stroke-width="1.600"><path d="M8.800 8.800H4.900A3.900 3.900 0 1 1 8.800 4.900Z"></path><path d="M11.200 8.800V4.900A3.900 3.900 0 1 1 15.100 8.800Z"></path><path d="M8.800 11.200V15.100A3.900 3.900 0 1 1 4.900 11.200Z"></path><path d="M11.200 11.200H15.100A3.900 3.900 0 1 1 11.200 15.100Z"></path></g>`, "0 0 20 20")}</button>
        <button class="pill" aria-label="Assistant">${face(30)}</button>
      </div>`;
  }
}

@customElement("task-bar")
class TaskBar extends LitElement {
  static styles = [sharedStyles, css`
    :host { display: grid; grid-template-columns: 1fr auto 1fr; align-items: center; height: 60px; flex: none; border-top: 1px solid #3a3d4c; color: #fff; font-size: 14px; line-height: 20px;
      background: linear-gradient(90deg, #1c222a 0, #1c222b 17%, #16234a 20%, #15224f 27%, #161c55 33%, #142255 45%, #1b1f40 50%, #1b1f3f 57%, #122058 61%, #14204f 66%, #1b2029 72%, #1c222c 100%); }
    .weather { justify-content: flex-start; gap: 6px; padding-left: 24px; text-align: left; }
    .weather span { display: block; }
    .weather .sub { color: #c9cbd1; }
    .center { display: flex; align-items: center; padding-left: 12px; }
    .start { width: 30px; margin-right: 16px; }
    .find { display: flex; align-items: center; gap: 12px; width: 274px; height: 40px; padding: 0 2px 0 14px; border-radius: 20px; background: rgba(255,255,255,.15); border: 1px solid rgba(255,255,255,.12); }
    .find input { flex: 1; min-width: 0; border: 0; outline: 0; padding: 0; background: none; font-size: 16px; }
    .find input::placeholder { color: #d7d9e5; opacity: 1; }
    .app { width: 55px; height: 50px; position: relative; }
    .task { margin-left: 4px; }
    .on::before { content: ""; position: absolute; inset: 0 3px; border-radius: 6px; background: rgba(255,255,255,.08); border: 1px solid rgba(255,255,255,.06); }
    .on::after { content: ""; position: absolute; left: 18px; bottom: 1px; width: 19px; height: 4px; border-radius: 2px; background: #4cc2ff; }
    .on svg { position: relative; }
    .tray { display: flex; align-items: center; justify-content: flex-end; padding-right: 24px; }
    .lang { text-align: center; margin: 0 23px 0 26px; }
    .net { gap: 9px; margin-right: 25px; }
    .clock { display: block; text-align: right; }
    .lang span, .clock span { display: block; }
  `];
  render() {
    const g = (id: string, a: string, b: string) => svg`<linearGradient id=${id} x1="0" y1="0" x2="1" y2="1"><stop offset="0" stop-color=${a}></stop><stop offset="1" stop-color=${b}></stop></linearGradient>`;
    const flower = (x: number, y: number, r: number, c: string, m: string) => svg`${[0, 45, 90, 135].map((a) => svg`<ellipse cx=${x} cy=${y} rx=${r} ry=${r * 0.32} fill=${c} transform=${`rotate(${a} ${x} ${y})`}></ellipse>`)}<circle cx=${x} cy=${y} r=${r * 0.35} fill=${m}></circle>`;
    return html`
      <button class="weather">
        <svg width="34" height="42" viewBox="0 0 34 42" aria-hidden="true">
          <defs>${g("cl", "#a9cdfb", "#4f8ae8")}</defs>
          <circle cx="24" cy="22" r="6" fill="#f7832b"></circle>
          <path d="M8 36A7.500 7.500 0 0 1 7.500 23A8.500 8.500 0 0 1 23 21A8 8 0 0 1 24 36Z" fill="url(#cl)"></path>
          <circle cx="24" cy="10" r="10" fill="#f99ca3"></circle>
          <text x="24" y="15" font-size="14" text-anchor="middle" fill="#1b1b1b">4</text>
        </svg>
        <span><span>88°F</span><span class="sub">Mostly cloudy</span></span>
      </button>
      <div class="center">
        <button class="start" aria-label="Start">${icon(30, svg`<defs>${g("w", "#8be9ff", "#0a9bf5")}</defs><path fill="url(#w)" d="M0 1Q0 0 1 0H14.200V14.200H0ZM15.800 0H29Q30 0 30 1V14.200H15.800ZM0 15.800H14.200V30H1Q0 30 0 29ZM15.800 15.800H30V29Q30 30 29 30H15.800Z"></path>`, "0 0 30 30")}</button>
        <label class="find">
          ${icon(20, svg`<circle cx="8.500" cy="8" r="6.500" fill="none" stroke="#e6e8f2" stroke-width="1.800"></circle><path d="M13 13L18 18.500" stroke="#e6e8f2" stroke-width="2.200"></path>`, "0 0 20 20")}
          <input type="search" placeholder="Search" aria-label="Search" />
          <svg width="60" height="36" viewBox="0 0 60 36" aria-hidden="true">
            <path d="M4 33Q0 22 5 11Q10 1 22 3L36 8L34 24L12 33Z" fill="#8a6a42"></path>
            <path d="M12 33Q10 24 14 19Q22 14 31 18Q35 24 34 33Z" fill="#c98d63"></path>
            <path d="M17 29Q20 27 24 29.500Q29 26.500 34 28.500" fill="none" stroke="#3d2414" stroke-width="1.500"></path>
            <circle cx="22" cy="7" r="7" fill="#f0609a"></circle><circle cx="24" cy="8" r="4" fill="#f992ba"></circle><circle cx="20" cy="14" r="3.500" fill="#e9518c"></circle>
            ${flower(14, 12, 7, "#f2dd3c", "#8b7311")}
            ${flower(33, 10, 7, "#e9e26a", "#a7921b")}
            ${flower(5, 22, 4, "#d7e08a", "#8c9a3a")}
            <circle cx="5" cy="13" r="3" fill="#ea5c8f"></circle><circle cx="36" cy="19" r="3" fill="#e8618f"></circle><circle cx="9" cy="29" r="2.200" fill="#c8d473"></circle>
            <path d="M38 6Q45 6 48 12L45 15Q41 12 38 6Z" fill="#d28a5a"></path>
            <path d="M47 11L58 17V21L45 15Z" fill="#8c4a20"></path>
          </svg>
        </label>
        <button class="app task" aria-label="Task view">${icon(30, svg`<defs>${g("t1", "#ffffff", "#dcdcdc")}${g("t2", "#777777", "#4a4a4a")}</defs><rect x="0" y="9" width="22" height="20" rx="1" fill="url(#t2)"></rect><rect x="7" y="1" width="23" height="20" rx="1" fill="url(#t1)"></rect><rect x="7" y="9" width="15" height="12" fill="#b9b9b9"></rect>`, "0 0 30 30")}</button>
        <button class="app on" aria-label="Chrome">${icon(30, svg`<circle cx="15" cy="15" r="15" fill="#fcc934"></circle><path d="M2 7.500A15 15 0 0 1 28 7.500H15L8.500 18.700Z" fill="#ea4335"></path><path d="M2 7.500L8.500 18.700A7.500 7.500 0 0 0 15 22.500L14.800 30A15 15 0 0 1 2 7.500Z" fill="#34a853"></path><path d="M8.500 18.700A7.500 7.500 0 0 0 21.500 18.700L14.900 30Z" fill="#34a853"></path><path d="M21.500 18.700L15 30A15 15 0 0 0 28 7.500H15Z" fill="#fcc934"></path><circle cx="15" cy="15" r="7.500" fill="#fff"></circle><circle cx="15" cy="15" r="6" fill="#2f7df0"></circle>`, "0 0 30 30")}</button>
        <button class="app" aria-label="Edge">${icon(30, svg`<defs>${g("e1", "#35c1f1", "#6be04a")}${g("e2", "#1b9de2", "#0d4f9e")}</defs><circle cx="15" cy="15" r="15" fill="url(#e2)"></circle><path d="M1 11A15 15 0 0 1 30 14Q30 21 23 21.500Q17 21.500 18.500 18Q20.500 12 14 9.500Q6 7.500 1 14Z" fill="url(#e1)"></path><path d="M10 18Q10 12.500 15 11.500Q12 20 19 23.500Q24 25.500 28 22Q23 30 16 29Q10 26 10 18Z" fill="#0b4a94"></path>`, "0 0 30 30")}</button>
        <button class="app" aria-label="Copilot">${icon(30, svg`<defs><linearGradient id="c1" x1="0" y1="0" x2="0" y2="1"><stop offset="0" stop-color="#1683e8"></stop><stop offset=".5" stop-color="#2cc1b0"></stop><stop offset="1" stop-color="#e9d83a"></stop></linearGradient><linearGradient id="c2" x1=".7" y1="0" x2=".2" y2="1"><stop offset="0" stop-color="#9a5cf5"></stop><stop offset=".5" stop-color="#f0588f"></stop><stop offset="1" stop-color="#ff9a5a"></stop></linearGradient></defs><path d="M7 3H18Q20.500 3 21 6L21.500 8H17Q15 8 14.200 11L12 20Q11.300 22 9 22H4Q1 22 2 18L4.500 6Q5.200 3 7 3Z" fill="url(#c1)"></path><path d="M23 27H12Q9.500 27 9 24L8.500 22H13Q15 22 15.800 19L18 10Q18.700 8 21 8H25Q29 8 28 12L25.500 24Q24.800 27 23 27Z" fill="url(#c2)"></path>`, "0 0 30 30")}</button>
        <button class="app" aria-label="Store">${icon(32, svg`<defs><linearGradient id="s" x1="0" y1="0" x2="0" y2="1"><stop offset="0" stop-color="#fff"></stop><stop offset="1" stop-color="#d9dadd"></stop></linearGradient></defs><path d="M10 7V2.500Q10 1.500 11 1.500H21Q22 1.500 22 2.500V7" fill="none" stroke="#2aa5f0" stroke-width="2"></path><path d="M2 5H30V27Q30 31 26 31H6Q2 31 2 27Z" fill="url(#s)"></path><path fill="#f25022" d="M10.500 12h5v5h-5z"></path><path fill="#7fba00" d="M16.500 12h5v5h-5z"></path><path fill="#00a4ef" d="M10.500 18h5v5h-5z"></path><path fill="#ffb900" d="M16.500 18h5v5h-5z"></path>`, "0 0 32 32")}</button>
        <button class="app" aria-label="L app"><svg width="30" height="31" viewBox="0 0 30 31" aria-hidden="true"><rect width="30" height="31" fill="#1f3fae"></rect><text x="11" y="22" font-family="Liberation Sans, sans-serif" font-size="22" font-weight="700" fill="#fff">L</text></svg></button>
        <button class="app" aria-label="Alexa">${icon(32, svg`<path d="M16 30L11 28A13.500 13.500 0 1 1 21 28.500Q17.500 28.500 16 30Z" fill="none" stroke="#00caff" stroke-width="3.400" stroke-linejoin="round"></path>`, "0 0 32 32")}</button>
        <button class="app" aria-label="File Explorer">${icon(30, svg`<defs><linearGradient id="f" x1="0" y1="0" x2="0" y2="1"><stop offset="0" stop-color="#ffd75e"></stop><stop offset="1" stop-color="#fcbc2e"></stop></linearGradient></defs><path d="M0 4Q0 2 2 2H10L12.500 5V9H0Z" fill="#e09c12"></path><path d="M0 8H11L13 5.500H28Q30 5.500 30 7.500V29H0Z" fill="url(#f)"></path><path d="M5 29V25Q5 22 8 22H22Q25 22 25 25V29Z" fill="#0f78c8"></path><path d="M8.500 25.500H21.500" stroke="#0a5593" stroke-width="1.300"></path>`, "0 0 30 30")}</button>
      </div>
      <div class="tray">
        <button aria-label="Hidden icons">${icon(14, line("M2 9.500L7 4.500L12 9.500", 1.5), "0 0 14 14")}</button>
        <button class="lang"><span><span>ENG</span><span>IN</span></span></button>
        <button class="net" aria-label="Network, volume, battery">
          ${icon(20, svg`<g fill="none" stroke="currentColor" stroke-width="1.500" stroke-linecap="round"><path d="M1 8A12.500 12.500 0 0 1 19 8M4 11A8.500 8.500 0 0 1 16 11M6.800 13.800A4.600 4.600 0 0 1 13.200 13.800"></path></g><circle cx="10" cy="16.500" r="1.600"></circle>`, "0 0 20 20")}
          ${icon(21, svg`<g fill="none" stroke="currentColor" stroke-width="1.400" stroke-linecap="round" stroke-linejoin="round"><path d="M1 8H4L9 3.500V17.500L4 13H1Z"></path><path d="M12 8A4 4 0 0 1 12 13M14.500 5.500A7.500 7.500 0 0 1 14.500 15.500M17 3.500A10.500 10.500 0 0 1 17 17.500"></path></g>`, "0 0 21 21")}
          ${icon(20, svg`<rect x="1" y="4.500" width="15.500" height="11" rx="2.500" fill="none" stroke="currentColor" stroke-width="1.400"></rect><rect x="3" y="6.500" width="9" height="7" rx="1"></rect><path d="M18.800 8.500V11.500" stroke="currentColor" stroke-width="1.700" stroke-linecap="round"></path>`, "0 0 20 20")}
        </button>
        <button class="clock"><span>18:47</span><span>06-07-2025</span></button>
      </div>`;
  }
}

@customElement("app-root")
class AppRoot extends LitElement {
  static styles = css`
    :host { display: flex; flex-direction: column; min-height: 100vh; font-family: "Open Sans", "Noto Sans", sans-serif; background: #fff; }
    main { display: flex; flex: 1; }
  `;
  render() {
    return html`<browser-chrome></browser-chrome><main><portal-rail></portal-rail><jupyter-lab></jupyter-lab></main><task-bar></task-bar>`;
  }
}
